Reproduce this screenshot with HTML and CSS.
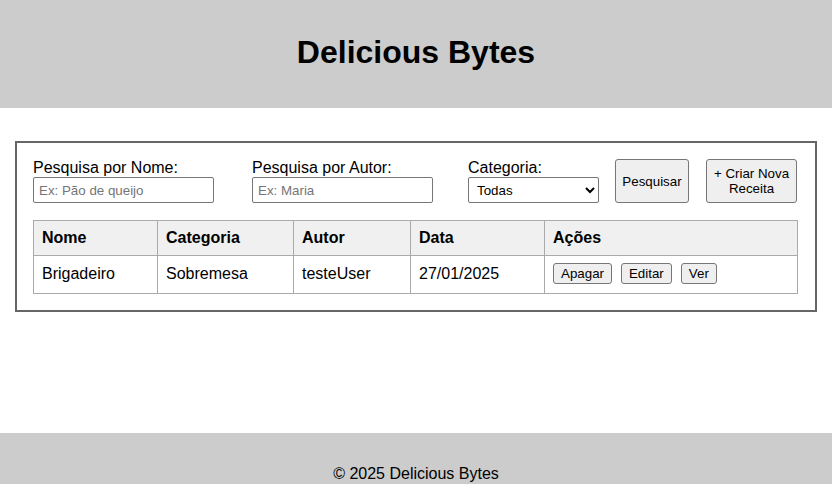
FILE: index.html
```html
<!DOCTYPE html>
<html lang="pt">
<head>
<meta charset="utf-8">
<title>Delicious Bytes</title>
<link rel="stylesheet" href="styles.css">
</head>
<body>
<header class="site-header">
  <h1 class="site-title">Delicious Bytes</h1>
</header>
<main class="main">
  <section class="panel">
    <form class="search-row">
      <div class="field field-nome">
        <label class="field-label" for="nome">Pesquisa por Nome:</label>
        <input class="text-input" id="nome" type="text" placeholder="Ex: Pão de queijo">
      </div>
      <div class="field field-autor">
        <label class="field-label" for="autor">Pesquisa por Autor:</label>
        <input class="text-input" id="autor" type="text" placeholder="Ex: Maria">
      </div>
      <div class="field field-cat">
        <label class="field-label" for="cat">Categoria:</label>
        <select class="select-input" id="cat">
          <option>Todas</option>
        </select>
      </div>
      <button type="button" class="btn btn-search">Pesquisar</button>
      <button type="button" class="btn btn-new">+ Criar Nova Receita</button>
    </form>
    <table class="recipes">
      <thead>
        <tr>
          <th class="col-nome">Nome</th>
          <th class="col-cat">Categoria</th>
          <th class="col-autor">Autor</th>
          <th class="col-data">Data</th>
          <th>Ações</th>
        </tr>
      </thead>
      <tbody>
        <tr>
          <td>Brigadeiro</td>
          <td>Sobremesa</td>
          <td>testeUser</td>
          <td>27/01/2025</td>
          <td class="actions"><button type="button" class="act">Apagar</button><button type="button" class="act">Editar</button><button type="button" class="act">Ver</button></td>
        </tr>
      </tbody>
    </table>
  </section>
</main>
<footer class="site-footer">
  <p class="copy">© 2025 Delicious Bytes</p>
</footer>
</body>
</html>
```

FILE: styles.css
```css
* { box-sizing: border-box; }
html, body { margin: 0; padding: 0; }
body {
  font-family: "Liberation Sans", Arial, sans-serif;
  color: #000;
  background: #fff;
  font-size: 16px;
}
.site-header {
  background: #cccccc;
  height: 108px;
  display: flex;
  align-items: center;
  justify-content: center;
}
.site-title {
  margin: 0;
  font-size: 32px;
  line-height: 37px;
  font-weight: bold;
  padding-bottom: 3px;
}
.main {
  padding: 33px 15px 0;
  height: 325px;
}
.panel {
  border: 2px solid #666666;
  padding: 16px 17px 16px 16px;
}
.search-row {
  display: flex;
  align-items: flex-end;
  gap: 17px;
  margin: 0 0 17px;
}
.field { display: flex; flex-direction: column; }
.field-nome { width: 202px; }
.field-autor { width: 199px; }
.field-cat { width: 130px; }
.field-label {
  font-size: 16px;
  line-height: 18px;
  height: 18px;
}
.text-input {
  width: 181px;
  height: 26px;
  border: 1px solid #767676;
  border-radius: 2px;
  padding: 0 5px;
  font-family: "Liberation Sans", Arial, sans-serif;
  font-size: 13.33px;
  background: #fff;
}
.text-input::placeholder { color: #757575; }
.select-input {
  width: 131px;
  height: 26px;
  border: 1px solid #767676;
  border-radius: 2px;
  font-family: "Liberation Sans", Arial, sans-serif;
  font-size: 13.33px;
  padding: 0 2px 0 4px;
  background: #fff;
  color: #000;
}
.btn {
  height: 44px;
  background: #efefef;
  border: 1px solid #767676;
  border-radius: 3px;
  font-family: "Liberation Sans", Arial, sans-serif;
  font-size: 13.33px;
  color: #000;
  padding: 0 6px;
  line-height: 15px;
}
.btn-search { width: 74px; }
.btn-new { width: 91px; padding: 0 4px; }
.recipes {
  width: 100%;
  border-collapse: collapse;
  border: 1px solid #aaaaaa;
}
.recipes th, .recipes td {
  border: 1px solid #aaaaaa;
  text-align: left;
  padding: 8px;
  font-size: 16px;
  line-height: 18px;
}
.recipes th {
  background: #f0f0f0;
  font-weight: bold;
}
.recipes td { height: 38px; padding-top: 7px; padding-bottom: 9px; }
.col-nome { width: 124px; }
.col-cat { width: 136px; }
.col-autor { width: 117px; }
.col-data { width: 134px; }
.actions { white-space: nowrap; }
.act {
  background: #efefef;
  border: 1px solid #767676;
  border-radius: 3px;
  font-family: "Liberation Sans", Arial, sans-serif;
  font-size: 13.33px;
  color: #000;
  padding: 1px 7px;
  height: 21px;
  margin-right: 9px;
  vertical-align: middle;
}
.site-footer {
  background: #cccccc;
  padding: 32px 0 0;
  height: 51px;
  text-align: center;
}
.copy {
  margin: 0;
  font-size: 16px;
  line-height: 18px;
}
```
